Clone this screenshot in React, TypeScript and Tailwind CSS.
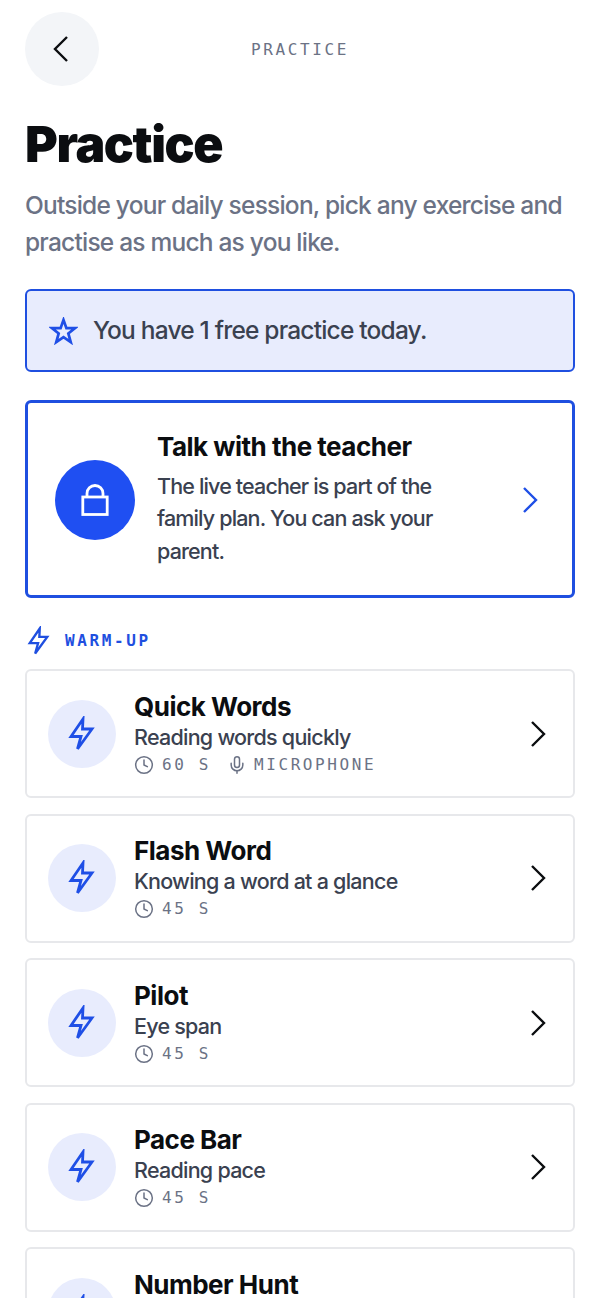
import React from "react";
import { Clock, Mic } from "lucide-react";

interface IExercise {
  title: string;
  subtitle: string;
  time: string;
  microphone?: boolean;
}

const exercises: IExercise[] = [
  { title: "Quick Words", subtitle: "Reading words quickly", time: "60 S", microphone: true },
  { title: "Flash Word", subtitle: "Knowing a word at a glance", time: "45 S" },
  { title: "Pilot", subtitle: "Eye span", time: "45 S" },
  { title: "Pace Bar", subtitle: "Reading pace", time: "45 S" },
  { title: "Number Hunt", subtitle: "Finding numbers", time: "45 S" },
];

// the icons in the picture have sharp corners, lucide's are rounded
const Bolt = ({ className }: { className: string }) => (
  <svg viewBox="0 0 27 36" className={className} fill="none" stroke="currentColor" strokeWidth="2.8" strokeLinejoin="miter">
    <path d="M15 3 3 20.5H13L9.5 33 24 13H14.5Z" />
  </svg>
);

const Chevron = ({ className, flip }: { className: string; flip?: boolean }) => (
  <svg viewBox="0 0 16 26" className={className} fill="none" stroke="currentColor" strokeWidth="2.4">
    <path d={flip ? "M14 1 2 13 14 25" : "M2 1 14 13 2 25"} />
  </svg>
);

const ExerciseRow = ({ title, subtitle, time, microphone }: IExercise) => (
  <div className="flex h-[129px] shrink-0 items-center rounded-[6px] border-2 border-[#e7e8eb] pl-[21px] pr-[27px]">
    <div className="flex h-[68px] w-[68px] shrink-0 items-center justify-center rounded-full bg-[#e8ecfd] text-[#1f4fe6]">
      <Bolt className="-ml-[1px] h-[36px] w-[27px]" />
    </div>
    <div className="ml-[18px] flex-1">
      <h4 className="text-[26px] leading-[31px] font-bold tracking-[-0.5px] text-[#0b0d10]">{title}</h4>
      <p className="text-[21.5px] leading-[31px] font-medium tracking-[-0.75px] text-[#3a4150]">{subtitle}</p>
      <div className="flex h-[24px] items-center font-['DejaVu_Sans_Mono',monospace] text-[16px] tracking-[2.6px] text-[#6b7285]">
        <Clock size={20} strokeWidth={1.8} />
        <span className="ml-[8px]">{time}</span>
        {microphone && (
          <>
            <Mic size={20} strokeWidth={1.8} className="ml-[16px]" />
            <span className="ml-[7px]">MICROPHONE</span>
          </>
        )}
      </div>
    </div>
    <Chevron className="h-[26px] w-[16px] text-[#0b0d10]" />
  </div>
);

const App = () => {
  return (
    <div className="h-[1298px] w-[600px] overflow-hidden bg-white px-[25px] pt-[12px] font-['Inter',sans-serif]">
      <header className="relative flex h-[74px] items-center justify-center">
        <button className="absolute left-0 top-0 flex h-[74px] w-[74px] items-center justify-center rounded-full bg-[#f3f5f8] text-[#0b0d10]">
          <Chevron flip className="-ml-[2px] h-[26px] w-[16px]" />
        </button>
        <span className="pt-[2px] font-['DejaVu_Sans_Mono',monospace] text-[16px] tracking-[2.6px] text-[#6b7285]">PRACTICE</span>
      </header>

      <h1 className="mt-[28px] text-[50px] leading-[60px] font-black tracking-[-1.4px] text-[#0b0d10]">Practice</h1>
      <p className="mt-[13px] text-[24.5px] leading-[37px] font-medium tracking-[-0.78px] text-[#6b7285]">
        Outside your daily session, pick any exercise and practise as much as you like.
      </p>

      <div className="mt-[28px] flex h-[83px] items-center rounded-[6px] border-2 border-[#1f4fe0] bg-[#e8ecfd] pl-[22px]">
        <svg viewBox="0 0 30 29" className="h-[28px] w-[29px] text-[#1f4fe6]" fill="none" stroke="currentColor" strokeWidth="2.8">
          <path d="M15 3 18 11.5H27L20 17 22.5 26 15 20.8 7.5 26 10 17 3 11.5H12Z" />
        </svg>
        <span className="ml-[15px] text-[24.5px] font-medium tracking-[-0.8px] text-[#3a4150]">You have 1 free practice today.</span>
      </div>

      <div className="mt-[28px] flex h-[198px] items-center rounded-[6px] border-[3px] border-[#1f4fe0] pl-[27px] pr-[34px]">
        <div className="mt-[2px] flex h-[80px] w-[80px] shrink-0 items-center justify-center rounded-full bg-[#1f4ff2] text-white">
          <svg viewBox="0 0 28 32" className="h-[32px] w-[28px]" fill="none" stroke="currentColor" strokeWidth="2.8">
            <rect x="1.8" y="13" width="24.4" height="17.5" />
            <path d="M6 13V9.5a8 8 0 0 1 16 0V13" />
          </svg>
        </div>
        <div className="ml-[22px] flex-1">
          <h3 className="text-[26px] leading-[32px] font-bold tracking-[-0.5px] text-[#0b0d10]">Talk with the teacher</h3>
          <p className="mt-[7px] w-[300px] text-[21.5px] leading-[32.5px] font-medium tracking-[-0.85px] text-[#3a4150]">
            The live teacher is part of the family plan. You can ask your parent.
          </p>
        </div>
        <Chevron className="mt-[2px] h-[26px] w-[16px] text-[#1f4fe6]" />
      </div>

      <div className="mt-[27px] flex h-[32px] items-center pl-[2px] font-['DejaVu_Sans_Mono',monospace] text-[16px] font-bold tracking-[2.6px] text-[#1f4fe0]">
        <Bolt className="h-[30px] w-[23px]" />
        <span className="ml-[15px]">WARM-UP</span>
      </div>

      <div className="mt-[12px] flex flex-col gap-[15.5px]">
        {exercises.map((exercise) => (
          <ExerciseRow key={exercise.title} {...exercise} />
        ))}
      </div>
    </div>
  );
};

export default App;
